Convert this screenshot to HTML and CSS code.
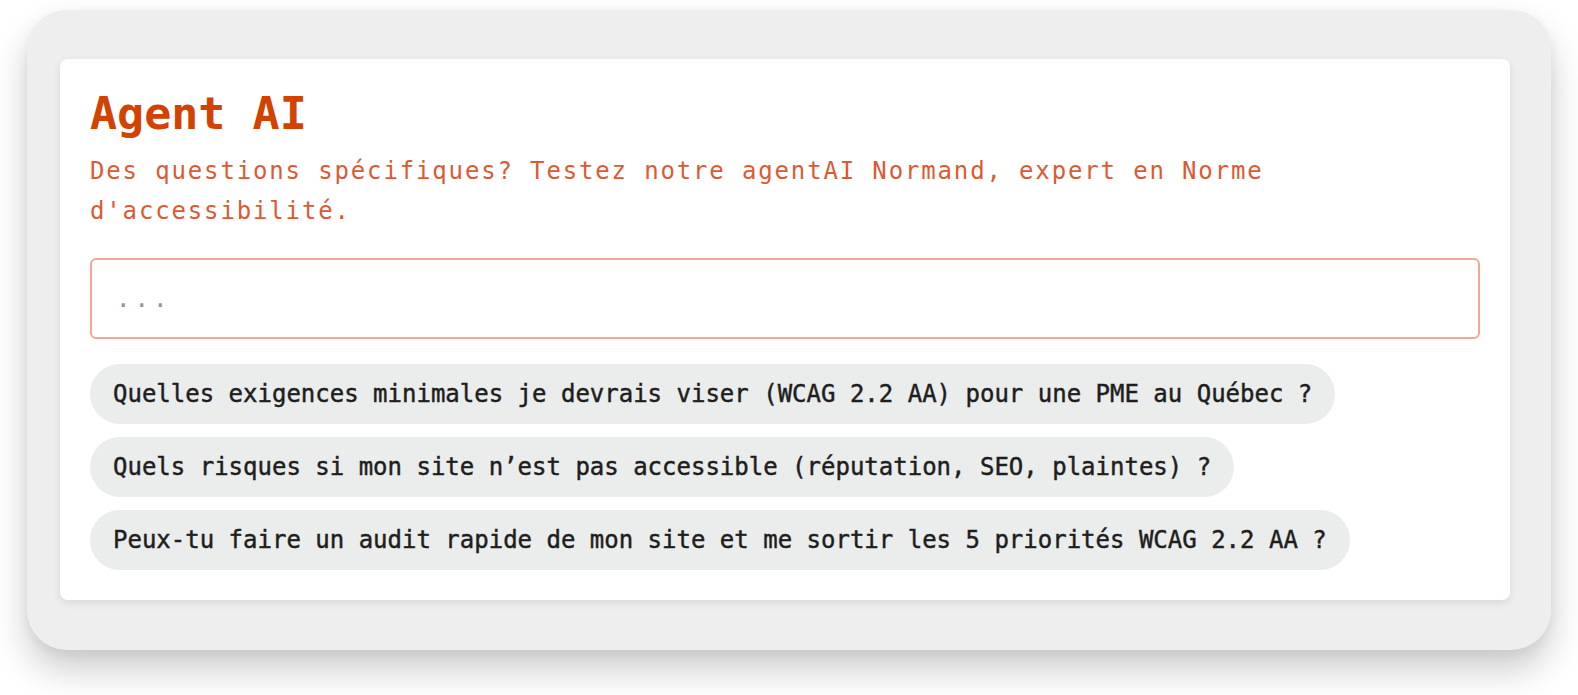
FILE: index.html
```html
<!DOCTYPE html>
<html lang="fr">
<head>
<meta charset="utf-8">
<title>Agent AI</title>
<link rel="stylesheet" href="styles.css">
</head>
<body>
<div class="page">
  <section class="frame">
    <div class="card">
      <h1 class="title">Agent AI</h1>
      <p class="subtitle">Des questions spécifiques? Testez notre agentAI Normand, expert en Norme d'accessibilité.</p>
      <input class="ask" type="text" placeholder="...">
      <div class="chips">
        <button class="chip" type="button">Quelles exigences minimales je devrais viser (WCAG 2.2 AA) pour une PME au Québec ?</button>
        <button class="chip" type="button">Quels risques si mon site n’est pas accessible (réputation, SEO, plaintes) ?</button>
        <button class="chip" type="button">Peux-tu faire un audit rapide de mon site et me sortir les 5 priorités WCAG 2.2 AA ?</button>
      </div>
    </div>
  </section>
</div>
</body>
</html>
```
FILE: styles.css
```css
* { box-sizing: border-box; }

html, body {
  margin: 0;
  background: #ffffff;
}

body {
  font-family: "DejaVu Sans Mono", "Liberation Mono", monospace;
  min-height: 695px;
}

.page {
  padding: 10px 27px 0 27px;
}

.frame {
  width: 1524px;
  background: #eeeeee;
  border-radius: 40px;
  padding: 49px 41px 50px 33px;
  box-shadow: 0 20px 36px rgba(0, 0, 0, 0.2), 0 4px 12px rgba(0, 0, 0, 0.05);
}

.card {
  background: #ffffff;
  border-radius: 8px;
  padding: 28px 30px 30px 30px;
  box-shadow: 0 3px 8px rgba(0, 0, 0, 0.09);
  display: flex;
  flex-direction: column;
}

.title {
  margin: 0;
  font-size: 45px;
  line-height: 54px;
  font-weight: 700;
  color: #d24200;
}

.subtitle {
  margin: 10px 0 0 0;
  font-size: 24px;
  line-height: 40px;
  letter-spacing: 1.85px;
  color: #dc5a33;
}

.ask {
  margin-top: 27px;
  width: 100%;
  height: 81px;
  border: 2px solid #f1a894;
  border-radius: 6px;
  padding: 0 24px;
  font-family: inherit;
  font-size: 24px;
  letter-spacing: 4px;
  outline: none;
  background: #ffffff;
}

.ask::placeholder {
  color: #8e949e;
}

.chips {
  margin-top: 25px;
  display: flex;
  flex-direction: column;
  align-items: flex-start;
  gap: 13px;
}

.chip {
  height: 60px;
  border: none;
  border-radius: 30px;
  background: #ebecec;
  padding: 0 23px;
  font-family: inherit;
  font-size: 24px;
  font-weight: 400;
  -webkit-text-stroke: 0.45px #1e1e1e;
  color: #1e1e1e;
  cursor: pointer;
}
```
